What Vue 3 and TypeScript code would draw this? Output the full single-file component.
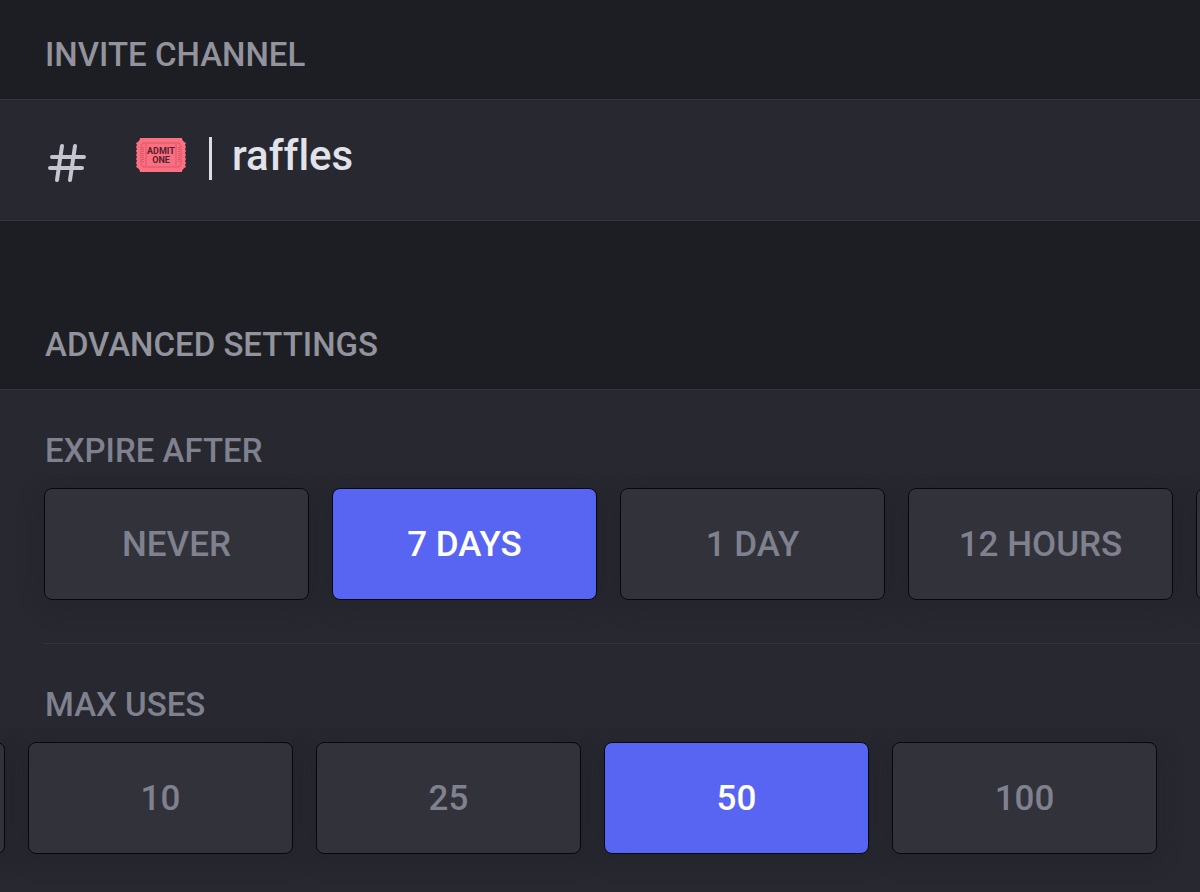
<script setup lang="ts">
import { onMounted, ref } from 'vue'

const expireOptions = ['NEVER', '7 DAYS', '1 DAY', '12 HOURS', '6 HOURS', '1 HOUR', '30 MINUTES']
const usesOptions = ['NO LIMIT', '1', '5', '10', '25', '50', '100']

const expireAfter = ref<string>('7 DAYS')
const maxUses = ref<string>('50')
const usesStrip = ref<HTMLElement | null>(null)

// Keep the selected number of uses in view when the sheet opens.
onMounted(() => {
  const strip = usesStrip.value
  if (strip) strip.scrollLeft = 880
})
</script>

<template>
  <main class="settings">
    <h2 class="section-title">INVITE CHANNEL</h2>
    <button class="channel" type="button">
      <svg class="hash" viewBox="0 0 40 40" aria-hidden="true">
        <path d="M15 4 L10 38 M28 4 L23 38 M5 15 H37 M3 26 H35" />
      </svg>
      <svg class="ticket" viewBox="0 0 52 36" role="img" aria-label="Ticket">
        <path
          class="ticket-body"
          d="M5 1 H47 Q47 4 51 6 L50 8 L51 10 L50 12 L51 14 L50 16 L51 18 L50 20 L51 22 L50 24 L51 26 L50 28 L51 30 Q47 32 47 35 H5 Q5 32 1 30 L2 28 L1 26 L2 24 L1 22 L2 20 L1 18 L2 16 L1 14 L2 12 L1 10 L2 8 L1 6 Q5 4 5 1 Z"
        />
        <path class="ticket-frame" d="M8 6 H44 L46 9 V27 L44 30 H8 L6 27 V9 Z M11 7 V29 M41 7 V29" />
        <path class="ticket-marks" d="M8 10 V26 M44 10 V26" />
        <text class="ticket-text">
          <tspan x="26" y="17">ADMIT</tspan>
          <tspan x="26" y="26">ONE</tspan>
        </text>
      </svg>
      <span class="bar"></span>
      <span class="channel-name">raffles</span>
    </button>

    <h2 class="section-title second">ADVANCED SETTINGS</h2>
    <div class="panel">
      <section class="field" aria-labelledby="expire-label">
        <h3 id="expire-label" class="field-title">EXPIRE AFTER</h3>
        <div class="strip">
          <button
            v-for="option in expireOptions"
            :key="option"
            type="button"
            class="choice"
            :class="{ selected: option === expireAfter }"
            :aria-pressed="option === expireAfter"
            @click="expireAfter = option"
          >
            {{ option }}
          </button>
        </div>
      </section>
      <hr class="divider" />
      <section class="field" aria-labelledby="uses-label">
        <h3 id="uses-label" class="field-title">MAX USES</h3>
        <div ref="usesStrip" class="strip">
          <button
            v-for="option in usesOptions"
            :key="option"
            type="button"
            class="choice"
            :class="{ selected: option === maxUses }"
            :aria-pressed="option === maxUses"
            @click="maxUses = option"
          >
            {{ option }}
          </button>
        </div>
      </section>
    </div>
  </main>
</template>

<style>
body {
  margin: 0;
  background: #1d1e23;
}
</style>

<style scoped>
.settings {
  overflow: hidden;
  background: #1d1e23;
  font-family: Roboto, "Open Sans", sans-serif;
  font-variant-ligatures: none;
  color: #93939e;
}

.section-title,
.field-title {
  margin: 0;
  padding: 0 45px;
  font-size: 33px;
  font-weight: 500;
  line-height: 44px;
}

.section-title {
  padding-top: 33px;
  padding-bottom: 22px;
}

.section-title.second {
  padding-top: 102px;
}

.channel {
  box-sizing: border-box;
  display: flex;
  align-items: center;
  width: 100%;
  height: 122px;
  padding: 0 44px 8px;
  border: 0;
  border-top: 1px solid #34353c;
  border-bottom: 1px solid #34353c;
  background: #272830;
  color: #e2e2ea;
  font: inherit;
  font-variant-ligatures: none;
  text-align: left;
}

.hash {
  width: 40px;
  height: 40px;
  margin: 12px 48px 0 3px;
  fill: none;
  stroke: #c5c5cf;
  stroke-width: 4;
  stroke-linecap: round;
}

.ticket {
  width: 52px;
  height: 36px;
  margin-right: 22px;
  margin-bottom: 2px;
}

.ticket-body {
  fill: #fb7080;
}

.ticket-frame {
  fill: none;
  stroke: #d95567;
  stroke-width: 1;
}

.ticket-marks {
  fill: none;
  stroke: #d95567;
  stroke-width: 2;
  stroke-dasharray: 1 1;
}

.ticket-text {
  fill: #55202c;
  font-family: "Liberation Sans Narrow", Roboto, sans-serif;
  font-size: 9px;
  font-weight: 700;
  text-anchor: middle;
}

.bar {
  width: 3px;
  height: 43px;
  margin-top: 4px;
  margin-right: 20px;
  background: #dcdce4;
}

.channel-name {
  font-size: 42px;
  font-weight: 500;
  line-height: 52px;
}

.panel {
  padding-top: 39px;
  border-top: 1px solid #34353c;
  border-bottom: 1px solid #34353c;
  background: #272830;
}

.field-title {
  color: #80818e;
}

.strip {
  display: flex;
  gap: 23px;
  padding: 15px 44px 43px;
  overflow-x: auto;
  scrollbar-width: none;
}

.choice {
  box-sizing: border-box;
  flex: 0 0 265px;
  height: 112px;
  border: 1px solid #08080f;
  border-radius: 8px;
  background: #32323b;
  box-shadow: 0 4px 24px rgba(32, 32, 36, 0.4);
  color: #80818e;
  font: inherit;
  font-size: 35px;
  font-weight: 500;
}

.choice.selected {
  background: #5865f2;
  color: #ffffff;
}

.divider {
  height: 1px;
  margin: 0 0 39px 44px;
  border: 0;
  background: #31323a;
}
</style>
